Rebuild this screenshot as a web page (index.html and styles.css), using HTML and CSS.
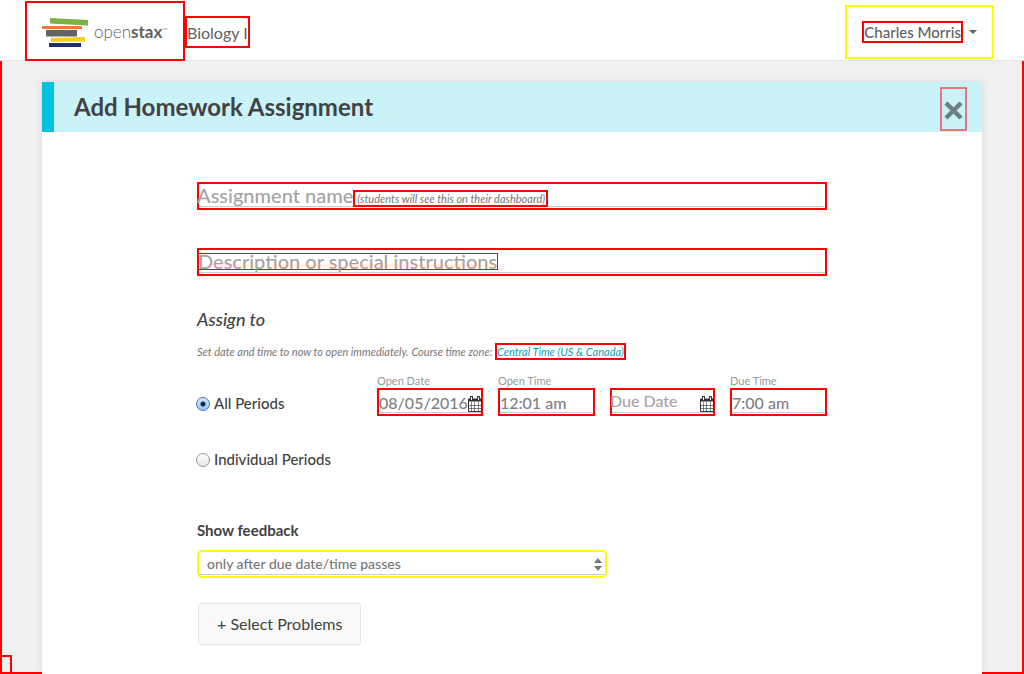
FILE: index.html
```html
<!DOCTYPE html>
<html lang="en">
<head>
<meta charset="utf-8">
<title>Add Homework Assignment</title>
<link rel="stylesheet" href="styles.css">
</head>
<body>
<header class="navbar">
  <a class="brand" href="#" aria-label="openstax">
    <svg class="brand-mark" width="48" height="32" viewBox="0 0 48 32" aria-hidden="true">
      <path fill="#7ab143" d="M8 3l38 2v5.500L8 8.500z"/>
      <path fill="#f47541" d="M0 11h40v3H0z"/>
      <path fill="#636466" d="M4 15h31v6.500H4z"/>
      <path fill="#f4d019" d="M9 23l34-1v4.500L9 27z"/>
      <path fill="#21306b" d="M7 28h32v4H7z"/>
    </svg>
    <span class="brand-name">open<b>stax</b><small>™</small></span>
  </a>
  <a class="course" href="#">Biology I</a>
  <button class="user" type="button"><span class="user-name">Charles Morris</span><span class="caret"></span></button>
</header>
<main class="page">
  <section class="card">
    <div class="card-head">
      <h1>Add Homework Assignment</h1>
      <button class="close" type="button" aria-label="Close">
        <svg width="21" height="21" viewBox="0 0 21 21" aria-hidden="true"><path d="M3 3l15 15M18 3L3 18" stroke="#111" stroke-width="4.500"/></svg>
      </button>
    </div>
    <form class="plan">
      <div class="field">
        <input id="name" type="text">
        <label class="float large" for="name">Assignment name<span class="hint">(students will see this on their dashboard)</span></label>
      </div>
      <div class="field">
        <input id="desc" type="text">
        <label class="float large" for="desc"><span class="traced">Description or special instructions</span></label>
      </div>
      <h2>Assign to</h2>
      <p class="note">Set date and time to now to open immediately. Course time zone: <a href="#">Central Time (US &amp; Canada)</a></p>
      <div class="schedule">
        <label class="choice"><input type="radio" name="periods" checked>All Periods</label>
        <div class="slot">
          <label for="open-date">Open Date</label>
          <div class="field">
            <input id="open-date" type="text" value="08/05/2016">
            <svg class="calendar" width="14" height="16" viewBox="0 0 14 16" aria-hidden="true"><use href="#cal"/></svg>
          </div>
        </div>
        <div class="slot">
          <label for="open-time">Open Time</label>
          <div class="field"><input id="open-time" type="text" value="12:01 am"></div>
        </div>
        <div class="slot">
          <div class="field">
            <input id="due-date" type="text">
            <label class="float" for="due-date">Due Date</label>
            <svg class="calendar" width="14" height="16" viewBox="0 0 14 16" aria-hidden="true">
              <g id="cal" fill="none" stroke="#333"><path d="M.5 3.500h13v12H.5z"/><path d="M0 4h14" stroke-width="3"/><path d="M3.500 0v5M10.500 0v5" stroke-width="3"/><path d="M3.500 1v3M10.500 1v3" stroke="#fff"/><path stroke-opacity=".6" d="M3.500 6v9M6.500 6v9M10.500 6v9M1 9.500h12M1 12.500h12"/></g>
            </svg>
          </div>
        </div>
        <div class="slot">
          <label for="due-time">Due Time</label>
          <div class="field"><input id="due-time" type="text" value="7:00 am"></div>
        </div>
      </div>
      <label class="choice"><input type="radio" name="periods">Individual Periods</label>
      <label class="feedback-label" for="feedback">Show feedback</label>
      <div class="select">
        <select id="feedback"><option>only after due date/time passes</option></select>
        <svg class="arrows" width="8" height="13" viewBox="0 0 8 13" aria-hidden="true"><path fill="#777" d="M4 0l4 5H0zM4 13l4-5H0z"/></svg>
      </div>
      <button class="problems" type="button">+ Select Problems</button>
    </form>
  </section>
  <div class="corner"></div>
</main>
</body>
</html>
```
FILE: styles.css
```css
* { box-sizing: border-box; }
body {
  margin: 0;
  min-height: 100vh;
  display: flex;
  flex-direction: column;
  font: 15px/20px Lato, "Liberation Sans", sans-serif;
  color: #424242;
  background: #f0f0f0;
}
button, input, select { font: inherit; color: inherit; margin: 0; }
button { background: none; cursor: pointer; }
a { text-decoration: none; }

.navbar {
  display: flex;
  align-items: center;
  height: 61px;
  padding: 0 30px 0 25px;
  background: #fff;
  border-bottom: 1px solid #e4e4e4;
}
.brand {
  position: relative;
  display: flex;
  align-items: center;
  gap: 4px;
  width: 160px;
  height: 60px;
  margin-top: 2px;
  padding-left: 15px;
  border: 2px solid red;
  color: #5f6062;
}
.brand-name { font-size: 17px; font-weight: 300; white-space: nowrap; }
.brand-name b { font-weight: 700; }
.brand-name small { font-size: 7px; vertical-align: 5px; }
.course {
  height: 32px;
  margin-top: 4px;
  border: 2px solid red;
  font-size: 16px;
  line-height: 30px;
  color: #5f6163;
}
.user {
  display: flex;
  align-items: center;
  gap: 6px;
  height: 54px;
  margin: 4px 0 0 auto;
  padding: 0 15px;
  border: 2px solid #ff0;
  color: #5f6163;
}
.user-name { border: 2px solid red; line-height: 18px; font-weight: 500; }
.caret { border: 4px solid transparent; border-top-color: #5f6163; border-bottom: 0; }

.page {
  position: relative;
  flex: 1;
  padding: 21px 40px 0;
  display: flex;
  border: solid red;
  border-width: 0 2px 2px;
}
.card {
  position: relative;
  flex: 1;
  margin-bottom: -2px;
  background: #fff;
  box-shadow: 0 0 8px rgba(0, 0, 0, .1);
}
.card-head {
  display: flex;
  align-items: center;
  height: 50px;
  padding: 0 15px 0 20px;
  border-left: 12px solid #00c1de;
  background: #caf2f9;
}
h1 { margin: 0 auto 0 0; font-size: 24px; line-height: 30px; }
.close {
  display: flex;
  align-items: center;
  justify-content: center;
  width: 27px;
  height: 44px;
  margin-top: 4px;
  padding: 2px 0 0;
  border: 2px solid red;
  opacity: .5;
}
.corner {
  position: absolute;
  left: -2px;
  bottom: -2px;
  width: 12px;
  height: 19px;
  border: 2px solid red;
}

.plan { padding: 50px 155px 29px; }
.field {
  position: relative;
  display: flex;
  height: 28px;
  padding-bottom: 1px;
  border: 2px solid red;
}
.plan > .field { margin-bottom: 38px; }
.field input {
  width: 100%;
  min-width: 0;
  padding: 4px 0 0;
  border: 0;
  border-bottom: 1px solid #ccc;
  background: none;
  font-size: 16px;
  font-weight: 500;
  color: #7f7f7f;
}
.float {
  position: absolute;
  left: -2px;
  top: 1px;
  font-size: 16px;
  font-weight: 500;
  white-space: nowrap;
  color: #a4a4a4;
}
.large { display: flex; align-items: center; top: -1px; font-size: 20px; }
.hint {
  height: 17px;
  margin-top: 7px;
  padding: 0 1px 0 2px;
  border: 2px solid red;
  font-size: 11px;
  line-height: 14px;
  font-weight: 400;
  font-style: italic;
  color: #777;
}
.traced { margin-top: 4px; line-height: 15px; border: 1px solid red; }
h2 {
  margin: -7px 0 13px;
  font-size: 18px;
  line-height: 24px;
  font-weight: 500;
  font-style: italic;
}
.note { margin: 0 0 14px; font-size: 11px; line-height: 16px; font-style: italic; white-space: nowrap; color: #777; }
.note a { border: 2px solid red; color: #0c9dbb; }
.schedule {
  display: grid;
  grid-template-columns: 165px 106fr 97fr 105fr 97fr;
  gap: 15px;
  align-items: end;
}
.slot > label { display: block; font-size: 11px; line-height: 14px; color: #999; }
.calendar { position: absolute; right: -1px; top: 6px; }
.choice { display: flex; align-items: center; gap: 4px; height: 24px; font-weight: 500; }
.schedule .choice { margin-bottom: 1px; }
.schedule + .choice { margin: 31px 0 49px; }
.choice input {
  appearance: none;
  width: 14px;
  height: 14px;
  margin: 2px 0 0 -1px;
  border: 1px solid #999;
  border-radius: 50%;
  background: linear-gradient(#fff, #e6e6e6);
}
.choice input:checked {
  border-color: #56749f;
  background: radial-gradient(circle, #16263c 2px, transparent 3px), linear-gradient(#d5e8fb, #8fc4f7);
}
.feedback-label { display: block; margin-bottom: 10px; font-weight: 700; }
.select {
  position: relative;
  display: flex;
  width: 410px;
  max-width: 100%;
  height: 28px;
  padding-bottom: 1px;
  border: 2px solid #ff0;
  border-radius: 5px;
}
.select select {
  appearance: none;
  width: 100%;
  padding: 2px 24px 0 8px;
  border: 0;
  border-bottom: 1px solid #ccc;
  background: none;
  font-size: 14px;
  font-weight: 500;
  color: #777;
}
.arrows { position: absolute; right: 3px; top: 6px; }
.problems {
  height: 42px;
  margin: 25px 0 0 1px;
  padding: 0 18px;
  border: 1px solid #e4e4e4;
  border-radius: 3px;
  background: #fafafa;
  font-size: 16px;
}
```
